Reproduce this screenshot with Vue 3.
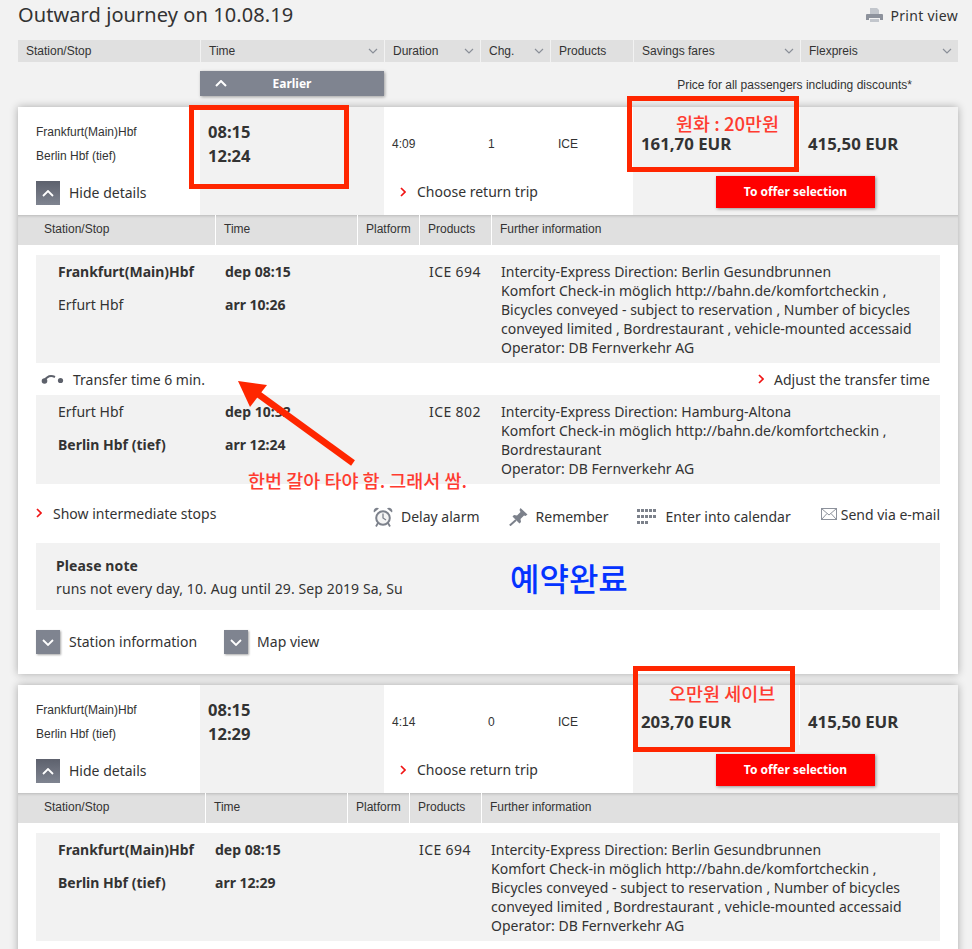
<script setup>
const heads = [
  { t: 'Station/Stop', w: 182 },
  { t: 'Time', w: 183, c: 1 },
  { t: 'Duration', w: 95, c: 1 },
  { t: 'Chg.', w: 69, c: 1 },
  { t: 'Products', w: 82 },
  { t: 'Savings fares', w: 166, c: 1 },
  { t: 'Flexpreis', w: 157, c: 1 },
]
const seg1 = {
  stops: [['Frankfurt(Main)Hbf', 'dep 08:15', true], ['Erfurt Hbf', 'arr 10:26', false]],
  prod: 'ICE 694',
  info: ['Intercity-Express Direction: Berlin Gesundbrunnen', 'Komfort Check-in möglich http://bahn.de/komfortcheckin ,', 'Bicycles conveyed - subject to reservation , Number of bicycles', 'conveyed limited , Bordrestaurant , vehicle-mounted accessaid', 'Operator: DB Fernverkehr AG'],
}
const seg2 = {
  stops: [['Erfurt Hbf', 'dep 10:32', false], ['Berlin Hbf (tief)', 'arr 12:24', true]],
  prod: 'ICE 802',
  info: ['Intercity-Express Direction: Hamburg-Altona', 'Komfort Check-in möglich http://bahn.de/komfortcheckin ,', 'Bordrestaurant', 'Operator: DB Fernverkehr AG'],
}
const seg3 = {
  stops: [['Frankfurt(Main)Hbf', 'dep 08:15', true], ['Berlin Hbf (tief)', 'arr 12:29', true]],
  prod: 'ICE 694',
  info: seg1.info,
}
const cards = [
  { arr: '12:24', dur: '4:09', chg: '1', price: '161,70 EUR', wide: true, segs: [seg1, seg2], full: true },
  { arr: '12:29', dur: '4:14', chg: '0', price: '203,70 EUR', wide: false, segs: [seg3], full: false },
]
</script>

<template>
  <div class="page">
    <div class="title-row">
      <h1 class="title">Outward journey on 10.08.19</h1>
      <div class="print">
        <svg width="17" height="15" viewBox="0 0 17 15" class="print-icon">
          <path d="M4 0h7l2 2v4H4z" fill="#c2c6cc" />
          <path d="M1 6h15a1 1 0 0 1 1 1v5h-3V10H3v2H0V7a1 1 0 0 1 1-1z" fill="#8d929c" />
          <rect x="4" y="11" width="9" height="3" fill="#c2c6cc" />
        </svg>
        <span>Print view</span>
      </div>
    </div>

    <div class="heads">
      <div v-for="h in heads" :key="h.t" class="head" :style="{ width: h.w + 'px' }">
        <span>{{ h.t }}</span>
        <svg v-if="h.c" width="10" height="6" viewBox="0 0 10 6" class="head-chev"><path d="M1 1l4 4 4-4" fill="none" stroke="#8a8f98" stroke-width="1.2" /></svg>
      </div>
    </div>

    <div class="earlier-row">
      <div class="earlier">
        <svg width="12" height="7" viewBox="0 0 12 7" class="earlier-chev"><path d="M1 6l5-5 5 5" fill="none" stroke="#fff" stroke-width="2" /></svg>
        <span>Earlier</span>
      </div>
      <div class="price-note">Price for all passengers including discounts*</div>
    </div>

    <section v-for="(card, ci) in cards" :key="ci" class="card">
      <div class="summary">
        <div class="col-left">
          <div class="route">Frankfurt(Main)Hbf</div>
          <div class="route">Berlin Hbf (tief)</div>
          <div class="toggle hide-toggle">
            <span class="sq sq-dark"><svg width="12" height="7" viewBox="0 0 12 7"><path d="M1 6l5-5 5 5" fill="none" stroke="#fff" stroke-width="1.8" /></svg></span>
            <span class="link lift">Hide details</span>
          </div>
        </div>
        <div class="col-time">
          <div>08:15</div>
          <div>{{ card.arr }}</div>
        </div>
        <div class="col-mid">
          <div class="facts">
            <span class="fact-dur">{{ card.dur }}</span>
            <span class="fact-chg">{{ card.chg }}</span>
            <span>ICE</span>
          </div>
          <div class="return"><svg width="6" height="10" viewBox="0 0 6 10" class="red-chev"><path d="M1 1l4 4-4 4" fill="none" stroke="#f01414" stroke-width="1.7" /></svg><span class="link">Choose return trip</span></div>
        </div>
        <div class="col-price">
          <div class="prices">
            <span class="price-a">{{ card.price }}</span>
            <span class="price-b">415,50 EUR</span>
          </div>
          <div class="offer">To offer selection</div>
        </div>
      </div>

      <div class="dhead" :class="{ narrow: !card.wide }">
        <div class="d1">Station/Stop</div>
        <div class="d2">Time</div>
        <div class="d3">Platform</div>
        <div class="d4">Products</div>
        <div class="d5">Further information</div>
      </div>

      <div class="body">
        <template v-for="(s, si) in card.segs" :key="si">
          <div class="seg" :class="{ narrow: !card.wide }">
            <div class="seg-stops">
              <div v-for="st in s.stops" :key="st[0]" class="stop">
                <span class="stop-name" :class="{ b: st[2] }">{{ st[0] }}</span>
                <b>{{ st[1] }}</b>
              </div>
            </div>
            <div class="seg-prod">{{ s.prod }}</div>
            <div class="seg-info"><div v-for="l in s.info" :key="l">{{ l }}</div></div>
          </div>
          <div v-if="card.full && si === 0" class="transfer">
            <div class="transfer-l">
              <svg width="23" height="10" viewBox="0 0 23 10"><path d="M3 7C6 2 10 1 14 3" fill="none" stroke="#5d616b" stroke-width="2" /><circle cx="3.500" cy="7" r="2.800" fill="#5d616b" /><circle cx="19.500" cy="6.500" r="2.600" fill="#5d616b" /></svg>
              <span>Transfer time 6 min.</span>
            </div>
            <div class="adjust"><svg width="6" height="10" viewBox="0 0 6 10" class="red-chev"><path d="M1 1l4 4-4 4" fill="none" stroke="#f01414" stroke-width="1.7" /></svg><span class="link">Adjust the transfer time</span></div>
          </div>
        </template>

        <template v-if="card.full">
          <div class="actions">
            <div class="show"><svg width="6" height="10" viewBox="0 0 6 10" class="red-chev"><path d="M1 1l4 4-4 4" fill="none" stroke="#f01414" stroke-width="1.7" /></svg><span class="link">Show intermediate stops</span></div>
            <div class="tools">
              <div class="tool t-alarm">
                <svg width="20" height="20" viewBox="0 0 20 20"><circle cx="10" cy="11" r="6.800" fill="#f4f4f4" stroke="#7c818b" stroke-width="2" /><path d="M10 6.500V11l3 2" fill="none" stroke="#7c818b" stroke-width="1.300" /><path d="M1 5.500a3.300 3.300 0 0 1 5-4zM19 5.500a3.300 3.300 0 0 0-5-4z" fill="#7c818b" /><path d="M5 16l-2 3.500M15 16l2 3.500" stroke="#7c818b" stroke-width="1.800" /></svg>
                <span class="link">Delay alarm</span>
              </div>
              <div class="tool t-pin">
                <svg width="19" height="18" viewBox="0 0 19 18"><path d="M11.500 0L18.500 6.500 16.500 8 15 7.500 11.500 11 12 14 10.500 15.500 3.500 8.500 5 7 8 7.500 11.500 4 10.500 2z" fill="#7c818b" /><path d="M7 12L.8 17.500" stroke="#7c818b" stroke-width="2" /></svg>
                <span class="link">Remember</span>
              </div>
              <div class="tool t-cal">
                <svg width="20" height="15" viewBox="0 0 20 15" fill="#7c818b"><rect x="0" y="0" width="3" height="3" /><rect x="4" y="0" width="3" height="3" /><rect x="8" y="0" width="3" height="3" /><rect x="12" y="0" width="3" height="3" /><rect x="16" y="0" width="3" height="3" /><rect x="0" y="6" width="3" height="3" /><rect x="4" y="6" width="3" height="3" /><rect x="8" y="6" width="3" height="3" /><rect x="12" y="6" width="3" height="3" /><rect x="16" y="6" width="3" height="3" /><rect x="0" y="12" width="3" height="3" /><rect x="4" y="12" width="3" height="3" /><rect x="8" y="12" width="3" height="3" /></svg>
                <span class="link">Enter into calendar</span>
              </div>
              <div class="tool t-mail">
                <svg width="16" height="12" viewBox="0 0 16 12"><rect x=".5" y=".5" width="15" height="11" fill="#fff" stroke="#8d929c" /><path d="M.5.5L8 7l7.500-6.500M.5 11.500L6 5.500M15.500 11.500L10 5.500" fill="none" stroke="#8d929c" /></svg>
                <span class="link">Send via e-mail</span>
              </div>
            </div>
          </div>

          <div class="note">
            <div class="note-h">Please note</div>
            <div>runs not every day, 10. Aug until 29. Sep 2019 Sa, Su</div>
          </div>

          <div class="bottom">
            <div class="toggle">
              <span class="sq"><svg width="12" height="7" viewBox="0 0 12 7"><path d="M1 1l5 5 5-5" fill="none" stroke="#fff" stroke-width="1.800" /></svg></span>
              <span class="link lift">Station information</span>
            </div>
            <div class="toggle">
              <span class="sq"><svg width="12" height="7" viewBox="0 0 12 7"><path d="M1 1l5 5 5-5" fill="none" stroke="#fff" stroke-width="1.800" /></svg></span>
              <span class="link lift">Map view</span>
            </div>
          </div>
        </template>
      </div>
    </section>

    <!-- Red and blue annotations drawn over the screenshot -->
    <div class="box box1"></div>
    <div class="box box2"></div>
    <div class="box box3"></div>
    <div class="note-k k1">원화 : 20만원</div>
    <div class="note-k k2">오만원 세이브</div>
    <div class="note-k k3">한번 갈아 타야 함. 그래서 쌈.</div>
    <div class="k4">예약완료</div>
    <svg class="arrow" width="130" height="100" viewBox="0 0 130 100">
      <path d="M121 89L26 20" stroke="#ff2600" stroke-width="6.500" fill="none" />
      <path d="M6 7L35 11L18 33z" fill="#ff2600" />
    </svg>
  </div>
</template>

<style>
html, body { margin: 0; background: #f2f2f2; }
</style>

<style scoped>
.page {
  position: relative;
  width: 972px;
  height: 949px;
  overflow: hidden;
  background: #f2f2f2;
  color: #333;
  font-family: "Noto Sans", sans-serif;
  font-size: 14px;
}
.title-row {
  display: flex;
  justify-content: space-between;
  padding: 0 14px 0 18px;
  height: 40px;
}
.title {
  margin: 0;
  padding-top: 1px;
  font-size: 20px;
  line-height: 28px;
  font-weight: 400;
  letter-spacing: .08px;
  color: #333;
}
.print {
  display: flex;
  align-items: flex-start;
  gap: 7px;
  padding-top: 6px;
  line-height: 20px;
  letter-spacing: .3px;
}
.print-icon { margin-top: 2px; }
.heads {
  display: flex;
  gap: 1px;
  margin-left: 18px;
  width: 940px;
  height: 22px;
  font: 12px/22px "Liberation Sans", Arial, sans-serif;
}
.head {
  position: relative;
  flex: none;
  box-sizing: border-box;
  padding-left: 8px;
  background: #e0e0e0;
}
.head-chev { position: absolute; right: 6px; top: 8px; }
.earlier-row {
  position: relative;
  height: 45px;
  padding-top: 9px;
  box-sizing: border-box;
}
.earlier {
  position: relative;
  margin-left: 200px;
  width: 184px;
  height: 25px;
  display: flex;
  align-items: center;
  justify-content: center;
  background: #7f8490;
  box-shadow: 1px 1px 3px rgba(0,0,0,.35);
  color: #fff;
  font-weight: 700;
  font-size: 12px;
}
.earlier-chev { position: absolute; left: 15px; top: 9px; }
.price-note {
  position: absolute;
  right: 60px;
  top: 15px;
  font: 12px/16px "Liberation Sans", Arial, sans-serif;
}
.card {
  margin: 0 14px 11px 18px;
  background: #fff;
  box-shadow: 0 0 8px rgba(0,0,0,.3);
}
.summary {
  display: flex;
  height: 108px;
}
.col-left {
  width: 182px;
  box-sizing: border-box;
  padding: 13px 0 0 18px;
  flex: none;
}
.route { font: 12px/24px "Liberation Sans", Arial, sans-serif; }
.toggle { display: flex; align-items: center; gap: 9px; }
.hide-toggle { margin-top: 13px; }
.lift { margin-top: -2px; }
.sq {
  width: 24px;
  height: 24px;
  display: flex;
  align-items: center;
  justify-content: center;
  background: #7f8490;
  box-shadow: 1px 1px 2px rgba(0,0,0,.35);
}
.sq-dark {
  background: linear-gradient(#5d616d, #7f8490);
  box-shadow: none;
}
.link { color: #333; white-space: nowrap; }
.col-time {
  width: 184px;
  box-sizing: border-box;
  flex: none;
  background: #f2f2f2;
  padding: 13px 0 0 8px;
  font-weight: 700;
  font-size: 16.500px;
  line-height: 24px;
}
.col-mid { width: 249px; flex: none; box-sizing: border-box; padding: 29px 0 0 8px; }
.facts {
  display: flex;
  font: 12px/16px "Liberation Sans", Arial, sans-serif;
}
.fact-dur { width: 96px; }
.fact-chg { width: 70px; }
.return { display: flex; align-items: center; margin: 30px 0 0 8px; }
.red-chev { flex: none; }
.return .red-chev { margin-right: 11px; }
.col-price { flex: 1; background: #f2f2f2; padding-top: 0; }
.prices {
  display: flex;
  height: 60px;
  font-weight: 700;
  font-size: 16.800px;
  line-height: 24px;
}
.price-a { width: 166px; flex: none; padding: 25px 0 0 8px; box-sizing: border-box; }
.price-b { flex: 1; padding: 25px 0 0 8px; border-left: 1px solid #fff; }
.offer {
  margin: 9px 0 0 83px;
  width: 159px;
  height: 32px;
  line-height: 32px;
  text-align: center;
  background: #f00;
  color: #fff;
  font-weight: 700;
  font-size: 12px;
  box-shadow: 1px 1px 3px rgba(0,0,0,.4);
}
.dhead {
  display: flex;
  gap: 1px;
  height: 30px;
  background: #fff;
  font: 12px/28px "Liberation Sans", Arial, sans-serif;
}
.dhead > div {
  background: #e0e0e0;
  box-sizing: border-box;
  flex: none;
  padding-left: 8px;
  box-shadow: inset 0 3px 3px -2px rgba(0,0,0,.18);
}
.dhead .d1 { width: 197px; padding-left: 26px; }
.dhead .d2 { width: 141px; }
.dhead .d3 { width: 61px; }
.dhead .d4 { width: 71px; }
.dhead .d5 { flex: 1; }
.dhead.narrow .d1 { width: 187px; }
.body { padding: 10px 18px 20px; }
.seg {
  display: flex;
  background: #f2f2f2;
  padding: 7px 0 6px;
  line-height: 19px;
}
.seg-stops { width: 393px; flex: none; padding-left: 22px; box-sizing: border-box; }
.seg-prod { width: 72px; flex: none; letter-spacing: .4px; }
.seg-info { white-space: nowrap; }
.seg.narrow .seg-stops { width: 383px; }
.stop { display: flex; height: 33px; }
.stop-name { width: 167px; flex: none; }
.stop-name.b { font-weight: 700; }
.seg.narrow .stop-name { width: 157px; }
.transfer {
  display: flex;
  justify-content: space-between;
  align-items: center;
  height: 32px;
}
.transfer-l { display: flex; align-items: center; gap: 9px; padding-left: 5px; }
.adjust { display: flex; align-items: center; padding-right: 10px; }
.adjust .red-chev { margin-right: 10px; }
.actions {
  display: flex;
  justify-content: space-between;
  height: 59px;
}
.show { display: flex; align-items: center; margin-top: -1px; height: 60px; }
.show .red-chev { margin-right: 11px; }
.tools { display: flex; height: 59px; align-items: center; padding-top: 6px; box-sizing: border-box; }
.tool { display: flex; align-items: center; }
.t-alarm { gap: 8px; margin-right: 29px; }
.t-pin { gap: 8px; margin-right: 28px; }
.t-cal { gap: 9px; margin-right: 30px; }
.t-mail { gap: 4px; margin-top: -5px; }
.note {
  background: #f2f2f2;
  height: 67px;
  box-sizing: border-box;
  padding: 11px 20px 0;
  line-height: 23px;
  letter-spacing: .1px;
}
.note-h { font-weight: 700; }
.bottom {
  display: flex;
  align-items: flex-start;
  gap: 27px;
  padding-top: 20px;
  height: 44px;
  box-sizing: border-box;
}
.box {
  position: absolute;
  box-sizing: border-box;
  border: 5px solid #ff2600;
}
.box1 { left: 189px; top: 105px; width: 160px; height: 84px; }
.box2 { left: 627px; top: 96px; width: 172px; height: 76px; }
.box3 { left: 633px; top: 666px; width: 162px; height: 86px; }
.note-k {
  position: absolute;
  color: #ff3b30;
  font-family: "Noto Sans CJK KR", sans-serif;
  font-size: 18.500px;
  line-height: 20px;
  font-weight: 500;
  white-space: nowrap;
}
.k1 { left: 676px; top: 113px; }
.k2 { left: 669px; top: 683px; }
.k3 { left: 248px; top: 470px; }
.k4 {
  position: absolute;
  left: 510px;
  top: 555px;
  color: #0433ff;
  font-family: "Noto Sans CJK KR", sans-serif;
  font-weight: 500;
  font-size: 32px;
  line-height: 44px;
}
.arrow { position: absolute; left: 232px; top: 374px; }
</style>
